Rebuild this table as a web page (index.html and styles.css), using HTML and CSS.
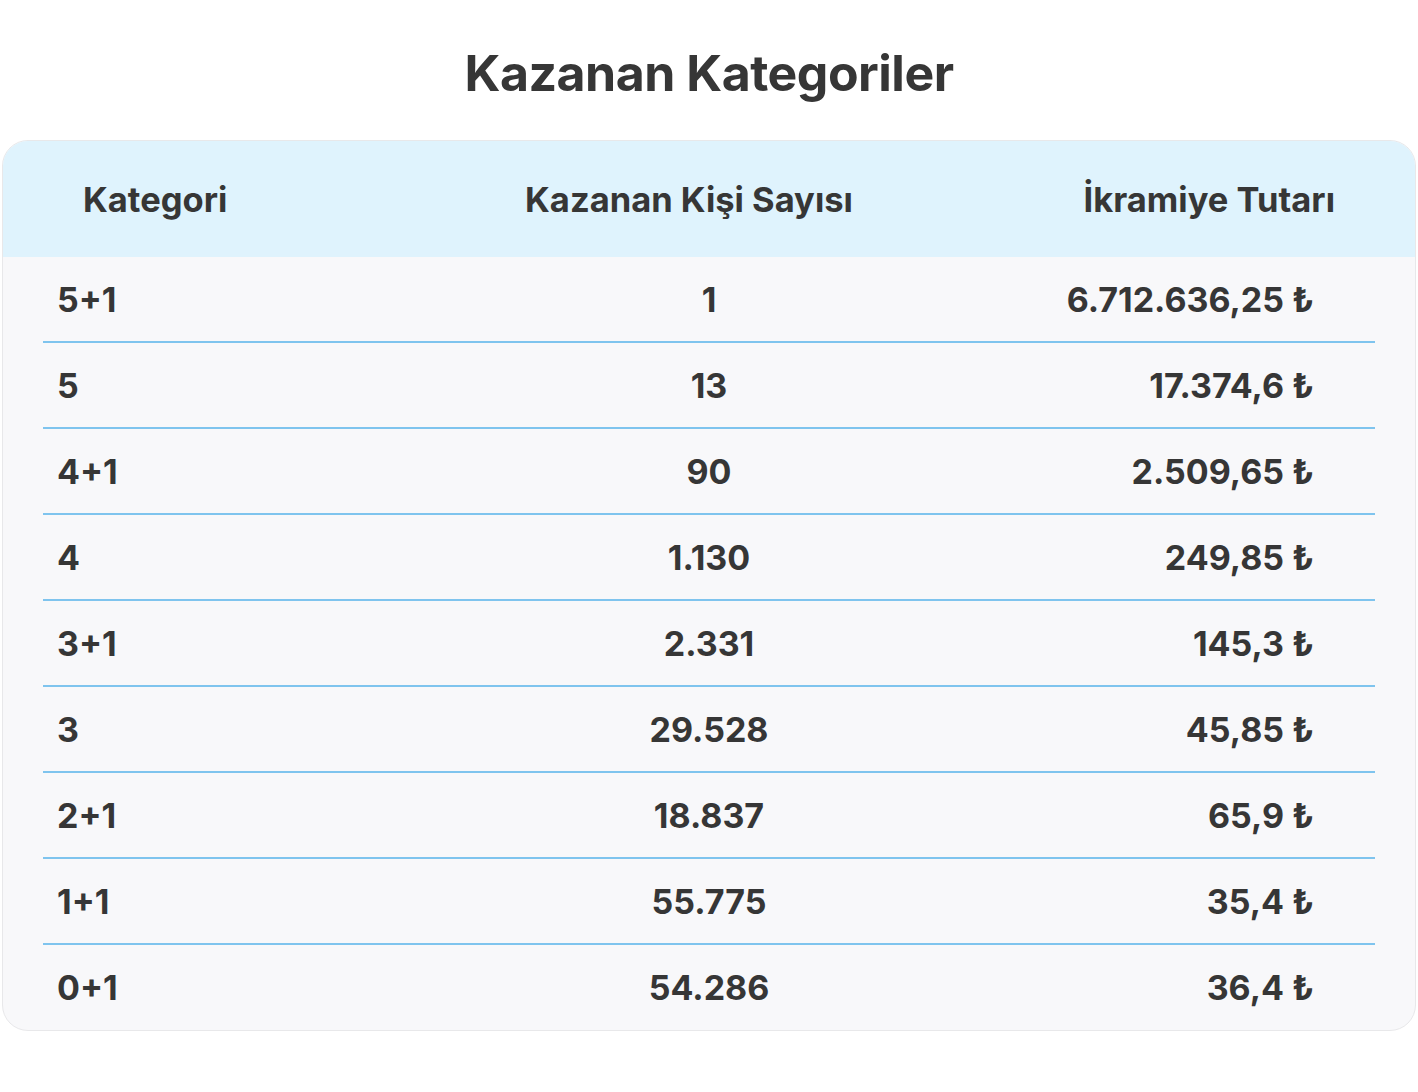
FILE: index.html
```html
<!DOCTYPE html>
<html lang="tr">
<head>
<meta charset="utf-8">
<title>Kazanan Kategoriler</title>
<link rel="stylesheet" href="styles.css">
</head>
<body>
<h1 class="title">Kazanan Kategoriler</h1>
<div class="card">
  <div class="head">
    <div class="hcell h1">Kategori</div>
    <div class="hcell h2">Kazanan Kişi Sayısı</div>
    <div class="hcell h3">İkramiye Tutarı</div>
  </div>
  <div class="body">
    <div class="row"><div class="c1">5+1</div><div class="c2">1</div><div class="c3">6.712.636,25 ₺</div></div>
    <div class="row"><div class="c1">5</div><div class="c2">13</div><div class="c3">17.374,6 ₺</div></div>
    <div class="row"><div class="c1">4+1</div><div class="c2">90</div><div class="c3">2.509,65 ₺</div></div>
    <div class="row"><div class="c1">4</div><div class="c2">1.130</div><div class="c3">249,85 ₺</div></div>
    <div class="row"><div class="c1">3+1</div><div class="c2">2.331</div><div class="c3">145,3 ₺</div></div>
    <div class="row"><div class="c1">3</div><div class="c2">29.528</div><div class="c3">45,85 ₺</div></div>
    <div class="row"><div class="c1">2+1</div><div class="c2">18.837</div><div class="c3">65,9 ₺</div></div>
    <div class="row"><div class="c1">1+1</div><div class="c2">55.775</div><div class="c3">35,4 ₺</div></div>
    <div class="row last"><div class="c1">0+1</div><div class="c2">54.286</div><div class="c3">36,4 ₺</div></div>
  </div>
</div>
</body>
</html>
```
FILE: styles.css
```css
* { box-sizing: border-box; }
html, body { margin: 0; padding: 0; background: #ffffff; }
body {
  font-family: Inter, "DejaVu Sans", sans-serif;
  font-weight: 700;
  color: #363636;
}
.title {
  margin: 0;
  height: 140px;
  padding-top: 44px;
  font-size: 50px;
  line-height: 58px;
  font-weight: 700;
  text-align: center;
  letter-spacing: -0.5px;
}
.card {
  margin: 0 2px;
  width: 1414px;
  border: 1px solid #e8e8ea;
  border-radius: 26px;
  overflow: hidden;
  background: #f8f8fa;
}
.head {
  height: 116px;
  background: #dff3fd;
  display: grid;
  grid-template-columns: 1fr 1fr 1fr;
  align-items: center;
  padding: 0 80px;
  font-size: 34.5px;
}
.h1 { text-align: left; }
.h2 { text-align: center; padding-right: 40px; }
.h3 { text-align: right; }
.body { padding: 0 40px; }
.row {
  height: 86px;
  border-bottom: 2px solid #7fc4ee;
  display: grid;
  grid-template-columns: 1fr 1fr 1fr;
  align-items: center;
  font-size: 34px;
}
.row.last { border-bottom: none; height: 85px; }
.c1 { text-align: left; padding-left: 14px; }
.c2 { text-align: center; }
.c3 { text-align: right; padding-right: 61px; }
```
